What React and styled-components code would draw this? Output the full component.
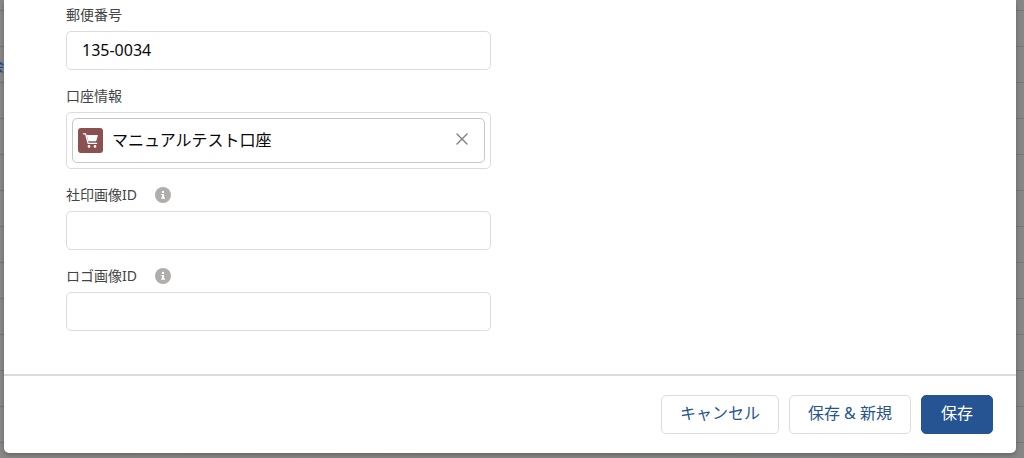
import React from "react";
import styled, { createGlobalStyle } from "styled-components";

const GlobalStyle = createGlobalStyle`
  *, *::before, *::after { box-sizing: border-box; }
  body {
    margin: 0;
    background: #878787;
    font-family: "Noto Sans", "Noto Sans CJK JP", sans-serif;
    overflow: hidden;
  }
  button, input { font: inherit; }
`;

const Page = styled.div`
  position: relative;
  min-height: 100vh;
  overflow: hidden;
`;

const Backdrop = styled.div`
  position: absolute;
  inset: 0;
  overflow: hidden;
  background: linear-gradient(to right, #8a8886, #868686);
`;

const BackdropRow = styled.div`
  height: ${(p) => (p.$short ? 11 : 36)}px;
  border-bottom: 1px solid #767676;
  display: flex;
  align-items: center;
`;

const BackdropLink = styled.a`
  color: #234f91;
  font-size: 14px;
  font-weight: 500;
  text-indent: -10px;
  text-decoration: none;
`;

const Modal = styled.section`
  position: relative;
  margin: 0 8px 5px 4px;
  background: #fff;
  border-radius: 0 0 5px 5px;
  box-shadow: 0 2px 4px rgba(0, 0, 0, 0.25);
`;

const Body = styled.div`
  display: grid;
  grid-template-columns: 1fr 1fr;
  column-gap: 38px;
  padding: 5px 62px 43px;
`;

const Column = styled.div`
  display: flex;
  flex-direction: column;
  gap: 16px;
`;

const Field = styled.div`
  display: flex;
  flex-direction: column;
  gap: 6px;
`;

const LabelRow = styled.div`
  display: flex;
  align-items: center;
  gap: 18px;
  height: 20px;
`;

const Label = styled.label`
  color: #444;
  font-size: 14px;
  line-height: 20px;
`;

const HelpButton = styled.button`
  display: flex;
  padding: 0;
  border: 0;
  background: none;
`;

const TextInput = styled.input`
  width: 100%;
  height: 39px;
  padding: 0 15px 2px;
  border: 1px solid #dcdcdc;
  border-radius: 5px;
  background: #fff;
  color: #080707;
  font-size: 16px;
  outline: none;
`;

const Lookup = styled.div`
  padding: 5px;
  border: 1px solid #dcdcdc;
  border-radius: 5px;
`;

const Pill = styled.div`
  display: flex;
  align-items: center;
  gap: 9px;
  height: 45px;
  padding: 0 15px 0 5px;
  border: 1px solid #c9c7c5;
  border-radius: 5px;
`;

const EntityIcon = styled.span`
  display: flex;
  width: 25px;
  height: 25px;
  border-radius: 3px;
  background: #8b5050;
`;

const PillInput = styled.input`
  flex: 1;
  min-width: 0;
  padding: 0 0 4px;
  border: 0;
  background: none;
  color: #080707;
  font-size: 16px;
  outline: none;
`;

const ClearButton = styled.button`
  display: flex;
  padding: 0 0 4px;
  border: 0;
  background: none;
`;

const Footer = styled.footer`
  display: flex;
  justify-content: flex-end;
  gap: 10px;
  padding: 19px 23px;
  border-top: 2px solid #dbdbdb;
`;

const Button = styled.button`
  height: 39px;
  padding: 0 ${(p) => (p.$primary ? 19 : 18)}px 3px;
  border: 1px solid ${(p) => (p.$primary ? "#265492" : "#dcdcdc")};
  border-radius: 5px;
  background: ${(p) => (p.$primary ? "#265492" : "#fff")};
  color: ${(p) => (p.$primary ? "#fff" : "#265492")};
  font-size: 16px;
  line-height: 24px;
`;

function HelpIcon() {
  return (
    <svg width="16" height="16" viewBox="0 0 16 16" aria-hidden="true">
      <circle cx="8" cy="8" r="8" fill="#b0adab" />
      <circle cx="8" cy="4.9" r="1.2" fill="#fff" />
      <path d="M6.2 7h2.9v3.6h.9v1.1H6.1v-1.1H7V8.1h-.8z" fill="#fff" />
    </svg>
  );
}

function CartIcon() {
  return (
    <svg width="25" height="25" viewBox="0 0 25 25" aria-hidden="true">
      <path
        d="M5.4 5.8h2.2l2.5 9.5h8.6"
        fill="none"
        stroke="#fff"
        strokeWidth="1.3"
        strokeLinecap="round"
        strokeLinejoin="round"
      />
      <path d="M8.7 7h10.6q.7 0 .5.7l-1.5 5q-.2.6-.8.6H10.4z" fill="#fff" />
      <circle cx="11" cy="18.4" r="1.3" fill="#fff" />
      <circle cx="17" cy="18.4" r="1.3" fill="#fff" />
    </svg>
  );
}

function CloseIcon() {
  return (
    <svg width="14" height="14" viewBox="0 0 14 14" aria-hidden="true">
      <path
        d="M2 2l10 10M12 2L2 12"
        stroke="#807e7c"
        strokeWidth="1.4"
        strokeLinecap="round"
      />
    </svg>
  );
}

function TextField({ id, label, value = "", help }) {
  return (
    <Field>
      <LabelRow>
        <Label htmlFor={id}>{label}</Label>
        {help && (
          <HelpButton type="button" aria-label={`${label} ヘルプ`}>
            <HelpIcon />
          </HelpButton>
        )}
      </LabelRow>
      <TextInput id={id} type="text" defaultValue={value} />
    </Field>
  );
}

function LookupField({ id, label, value }) {
  return (
    <Field>
      <LabelRow>
        <Label htmlFor={id}>{label}</Label>
      </LabelRow>
      <Lookup>
        <Pill>
          <EntityIcon>
            <CartIcon />
          </EntityIcon>
          <PillInput id={id} type="text" readOnly value={value} />
          <ClearButton type="button" aria-label="選択をクリア">
            <CloseIcon />
          </ClearButton>
        </Pill>
      </Lookup>
    </Field>
  );
}

export default function App() {
  return (
    <Page>
      <GlobalStyle />
      <Backdrop aria-hidden="true">
        {Array.from({ length: 14 }, (_, i) => (
          <BackdropRow key={i} $short={i === 0}>
            {i === 2 && (
              <BackdropLink href="#" tabIndex={-1}>
                会
              </BackdropLink>
            )}
          </BackdropRow>
        ))}
      </Backdrop>
      <Modal role="dialog" aria-label="編集">
        <Body>
          <Column>
            <TextField id="postal" label="郵便番号" value="135-0034" />
            <LookupField id="account" label="口座情報" value="マニュアルテスト口座" />
            <TextField id="seal" label="社印画像ID" help />
            <TextField id="logo" label="ロゴ画像ID" help />
          </Column>
        </Body>
        <Footer>
          <Button type="button">キャンセル</Button>
          <Button type="button">保存 &amp; 新規</Button>
          <Button type="button" $primary>
            保存
          </Button>
        </Footer>
      </Modal>
    </Page>
  );
}
